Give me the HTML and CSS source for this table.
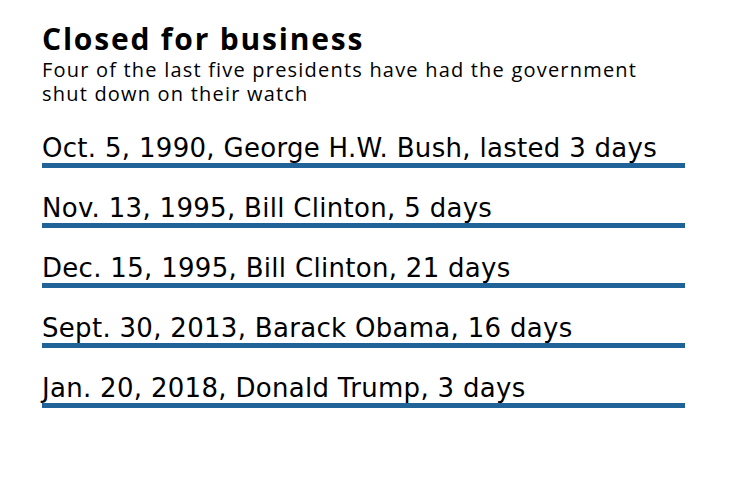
FILE: index.html
```html
<!DOCTYPE html>
<html>
<head>
<meta charset="utf-8">
<link rel="stylesheet" href="styles.css">
</head>
<body>
<div class="chart">
  <h1 class="title">Closed for business</h1>
  <p class="subtitle">Four of the last five presidents have had the government<br>shut down on their watch</p>
  <ul class="list">
    <li class="row">Oct. 5, 1990, George H.W. Bush, lasted 3 days</li>
    <li class="row">Nov. 13, 1995, Bill Clinton, 5 days</li>
    <li class="row">Dec. 15, 1995, Bill Clinton, 21 days</li>
    <li class="row">Sept. 30, 2013, Barack Obama, 16 days</li>
    <li class="row">Jan. 20, 2018, Donald Trump, 3 days</li>
  </ul>
</div>
</body>
</html>
```

FILE: styles.css
```css
html, body {
  margin: 0;
  padding: 0;
  background: #ffffff;
}
.chart {
  width: 643px;
  padding: 20px 0 0 42px;
  color: #000;
}
.title {
  margin: 0;
  font-family: "Open Sans", sans-serif;
  font-weight: 700;
  font-size: 30px;
  line-height: 38px;
  letter-spacing: 1.8px;
}
.subtitle {
  margin: 0;
  font-family: "Open Sans", sans-serif;
  font-size: 20px;
  line-height: 24px;
  letter-spacing: 1.2px;
}
.list {
  list-style: none;
  margin: 27px 0 0 0;
  padding: 0;
}
.row {
  font-family: "DejaVu Sans", Verdana, sans-serif;
  font-size: 26px;
  line-height: 30px;
  letter-spacing: 0.3px;
  padding-top: 25px;
  height: 30px;
  border-bottom: 5px solid #1f6399;
}
.row:first-child {
  padding-top: 0;
}
```
